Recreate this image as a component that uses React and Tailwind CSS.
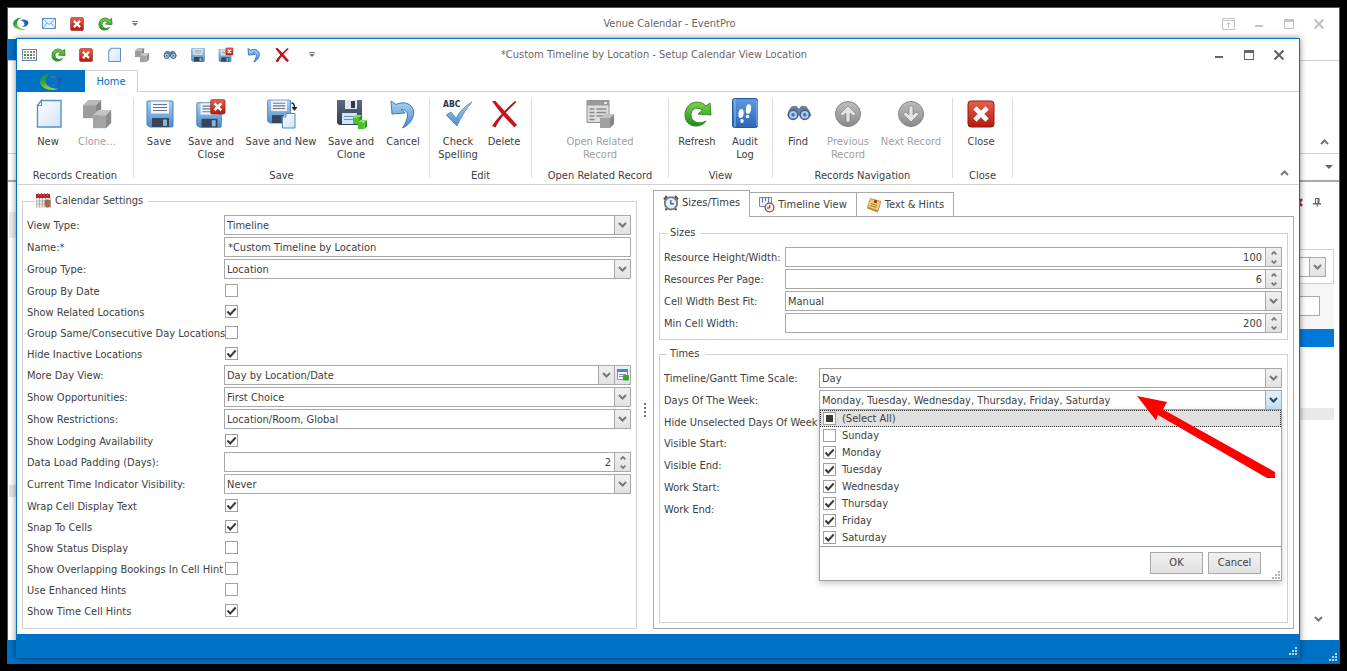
import React, { useEffect, useRef, useState } from "react";

/* ---------- icons ---------- */

function Svg({ small, children }) {
  return (
    <svg
      viewBox="0 0 32 32"
      aria-hidden="true"
      className={small ? "h-4 w-4 shrink-0" : "h-8 w-8 shrink-0"}
    >
      {children}
    </svg>
  );
}

function Gradients() {
  return (
    <svg className="absolute h-0 w-0" aria-hidden="true">
      <defs>
        <linearGradient id="gBlue" x1="0" y1="0" x2="0" y2="1">
          <stop offset="0" stopColor="#a9d2f3" />
          <stop offset="1" stopColor="#4d8bc8" />
        </linearGradient>
        <linearGradient id="gPage" x1="0" y1="0" x2="1" y2="1">
          <stop offset="0" stopColor="#ffffff" />
          <stop offset="1" stopColor="#cfe4f8" />
        </linearGradient>
        <linearGradient id="gRed" x1="0" y1="0" x2="0" y2="1">
          <stop offset="0" stopColor="#e8604c" />
          <stop offset="1" stopColor="#b31a0e" />
        </linearGradient>
        <linearGradient id="gGreen" x1="0" y1="0" x2="0" y2="1">
          <stop offset="0" stopColor="#7ed348" />
          <stop offset="1" stopColor="#1f8a1c" />
        </linearGradient>
        <linearGradient id="gGray" x1="0" y1="0" x2="0" y2="1">
          <stop offset="0" stopColor="#bdbdbd" />
          <stop offset="1" stopColor="#8a8a8a" />
        </linearGradient>
        <linearGradient id="gDark" x1="0" y1="0" x2="0" y2="1">
          <stop offset="0" stopColor="#5a6984" />
          <stop offset="1" stopColor="#313d55" />
        </linearGradient>
        <linearGradient id="gBook" x1="0" y1="0" x2="0" y2="1">
          <stop offset="0" stopColor="#5d9be2" />
          <stop offset="1" stopColor="#2c65b4" />
        </linearGradient>
        <linearGradient id="gLogo" x1="0" y1="0" x2="0" y2="1">
          <stop offset="0" stopColor="#1f8a4c" />
          <stop offset="0.5" stopColor="#2fa046" />
          <stop offset="1" stopColor="#a4d636" />
        </linearGradient>
        <linearGradient id="gLogoBlue" x1="0" y1="0" x2="1" y2="0">
          <stop offset="0" stopColor="#2f8fd0" />
          <stop offset="1" stopColor="#1c4f9f" />
        </linearGradient>
      </defs>
    </svg>
  );
}

const Logo = ({ large }) => (
  <svg viewBox="0 0 32 26" aria-hidden="true" className={large ? "h-[18px] w-[22px]" : "h-[13px] w-4"}>
    <path d="M18 1C8 1 0 7 0 14c0 7 9 12 19 12 3 0 6-1 8-2-9 1-19-4-19-11C8 7 12 3 18 1z" fill="url(#gLogo)" />
    <path d="M14 6c8-3 17 1 17 6-1 6-8 9-15 8 4-1 7-3 7-6s-4-6-9-8z" fill="url(#gLogoBlue)" />
  </svg>
);

const NewIcon = ({ small }) => (
  <Svg small={small}>
    <path d="M9.500 2.500H29v26.500H5.500V7.500z" fill="url(#gPage)" stroke="#5b8fc8" strokeWidth={small ? "2" : "1.400"} />
    <path d="M9.500 2.500v5h-4z" fill="#ffffff" stroke="#5b8fc8" strokeWidth="1.200" />
  </Svg>
);

function Cube({ x, y, s, top, front, side }) {
  return (
    <g transform={`translate(${x} ${y}) scale(${s})`}>
      <path d="M0 4l4-4h10l-4 4z" fill={top} />
      <path d="M10 4l4-4v10l-4 4z" fill={side} />
      <path d="M0 4h10v10H0z" fill={front} />
    </g>
  );
}

const CloneIcon = ({ small }) => (
  <Svg small={small}>
    <Cube x={2} y={2} s={1.3} top="#b9b9b9" front="#9c9c9c" side="#858585" />
    <Cube x={12} y={12} s={1.3} top="#c4c4c4" front="#a4a4a4" side="#8c8c8c" />
  </Svg>
);

function Disk() {
  return (
    <g>
      <path d="M4 3h24a1 1 0 0 1 1 1v24a1 1 0 0 1-1 1H6l-3-2V4a1 1 0 0 1 1-1z" fill="url(#gBlue)" stroke="#4a80b8" strokeWidth="1" />
      <path d="M7 3.500h18v12H7z" fill="#eef5fb" />
      <path d="M9 6.500h14M9 9.500h14M9 12.500h14" stroke="#6d7580" strokeWidth="1.200" />
      <path d="M8 20h17v9H8z" fill="#36455a" />
      <path d="M19 21.500h4v6.500h-4z" fill="#8ab4de" />
    </g>
  );
}

const RedX = () => (
  <g>
    <rect x="1" y="1" width="26" height="26" rx="3" fill="url(#gRed)" stroke="#97180e" strokeWidth="1" />
    <path d="M9.500 9.500l9 9M18.500 9.500l-9 9" stroke="#fff" strokeWidth="4.600" strokeLinecap="square" />
  </g>
);

const SaveIcon = ({ small }) => (
  <Svg small={small}>
    <g transform={small ? undefined : "translate(1 0)"}>
      <Disk />
    </g>
  </Svg>
);
const SaveCloseIcon = ({ small }) => (
  <Svg small={small}>
    <g transform="translate(-1 2) scale(.94)">
      <Disk />
    </g>
    <g transform="translate(15 1) scale(.56)">
      <RedX />
    </g>
  </Svg>
);
const SaveNewIcon = () => (
  <Svg>
    <g transform="translate(0 -.5) scale(.88)">
      <Disk />
    </g>
    <path d="M21 15.500h9v14.500H17.500V19z" fill="url(#gPage)" stroke="#4f8bc7" strokeWidth="1" />
    <path d="M21 15.500V19h-3.500" fill="none" stroke="#4f8bc7" strokeWidth="1" />
    <path d="M26.500 5c2.500 0 3 1.500 3 5" fill="none" stroke="#222" strokeWidth="1.400" />
    <path d="M26.500 9h6l-3 4z" fill="#222" />
  </Svg>
);
const SaveCloneIcon = () => (
  <Svg>
    <path d="M2 2h25v25H4l-2-2z" fill="url(#gDark)" />
    <path d="M10 2h12v9H10z" fill="#e4e8ee" />
    <path d="M16 3h4v7h-4z" fill="#2a3750" />
    <path d="M7 15h15v11H7z" fill="#cfe4f8" />
    <path d="M9 18.500h11M9 21.500h9" stroke="#6e90b4" strokeWidth="1.200" />
    <Cube x={18} y={17} s={0.65} top="#8be04c" front="#4cc02e" side="#2f9a1c" />
    <Cube x={23} y={22} s={0.65} top="#8be04c" front="#4cc02e" side="#2f9a1c" />
  </Svg>
);
const UndoIcon = ({ small }) => (
  <Svg small={small}>
    <path
      d="M4 3l1 13 13-1-4-3.500c6 0 8 5 5.500 10.500-1 3-2 5-4 8 8-3.500 12-11 11-17C25.500 6 17 2.500 9 6.500z"
      fill="url(#gBlue)"
      stroke="#3f78c4"
      strokeWidth={small ? "2" : "1"}
    />
  </Svg>
);
const DeleteIcon = ({ small }) => (
  <Svg small={small}>
    <path
      d="M4 3l3.500 0C13 9 22 19 29 27l-2.500 2.500C19 22 10 12 4 3z"
      fill="#c4161c"
      stroke="#c4161c"
      strokeWidth={small ? "2" : "0"}
    />
    <path
      d="M27 3l1.500 1C20 12 12 20 7.500 29.500L4 28C10 19 18 11 27 3z"
      fill="#b8141a"
      stroke="#b8141a"
      strokeWidth={small ? "2" : "0"}
    />
  </Svg>
);
const SpellIcon = () => (
  <Svg>
    <path d="M4 17l5-3 5 6C18 13 23 8 30 4 24 11 19 19 15 28z" fill="url(#gBlue)" stroke="#4c86c2" strokeWidth="0.800" />
    <text x="1" y="9" fontSize="8.500" fontWeight="700" fontFamily="DejaVu Sans Condensed, sans-serif" fill="#24344e">
      ABC
    </text>
  </Svg>
);
const RelatedIcon = () => (
  <Svg>
    <path d="M3 2.500h22v22H3z" fill="#dedede" stroke="#8f8f8f" />
    <path d="M3 2.500h22v5H3z" fill="#9a9a9a" />
    <path d="M20 4h3v2h-3z" fill="#e4e4e4" />
    <path d="M5.500 11h5M12.500 11h10M5.500 14.500h5M12.500 14.500h10M5.500 18h5M12.500 18h10M5.500 21.500h5" stroke="#8a8a8a" strokeWidth="1.300" />
    <Cube x={16} y={16} s={1} top="#c2c2c2" front="#a0a0a0" side="#868686" />
  </Svg>
);
const RefreshIcon = ({ small }) => (
  <Svg small={small}>
    <path
      d="M29 5l1 12-13-1 4.500-4C15 8 10 11 10 17c0 7 8 10 15 6C20 31 4 30 4 17 4 5 17 0 25 8z"
      fill="url(#gGreen)"
      stroke="#2f8f2a"
      strokeWidth={small ? "2" : "1"}
      strokeLinejoin="round"
    />
  </Svg>
);
const AuditIcon = () => (
  <Svg>
    <rect x="3.500" y="0.500" width="25" height="29" rx="2" fill="url(#gBook)" stroke="#24569c" />
    <path d="M6 1v28M28 3v25" stroke="#8fbcf0" strokeWidth="1" />
    <ellipse cx="19.500" cy="11" rx="2.600" ry="4.800" fill="#fff" transform="rotate(8 19.500 11)" />
    <ellipse cx="18.500" cy="18.500" rx="1.700" ry="1.700" fill="#fff" />
    <ellipse cx="12" cy="15.500" rx="2.600" ry="4.600" fill="#fff" transform="rotate(8 12 16)" />
    <ellipse cx="13" cy="23" rx="1.700" ry="2" fill="#fff" />
  </Svg>
);
const FindIcon = ({ small }) => (
  <Svg small={small}>
    <g transform={small ? undefined : "translate(2.500 1) scale(.9)"}>
      <path d="M5 12l3-4 5-.5 3 3 3-3 5 .5 3 4 3 6-6 5h-3l-5-5-5 5H9l-6-5z" fill="#6b7f9c" />
      <circle cx="9.500" cy="17.500" r="6" fill="#4b5f80" />
      <circle cx="22.500" cy="17.500" r="6" fill="#4b5f80" />
      <circle cx="9.500" cy="17.500" r="4.300" fill="#a4ccf5" />
      <circle cx="22.500" cy="17.500" r="4.300" fill="#a4ccf5" />
      <circle cx="9.500" cy="17.500" r="1.900" fill="#3b76c4" />
      <circle cx="22.500" cy="17.500" r="1.900" fill="#3b76c4" />
    </g>
  </Svg>
);
const PrevIcon = () => (
  <Svg>
    <circle cx="16" cy="16" r="12.500" fill="url(#gGray)" stroke="#858585" />
    <path d="M16 8l8 8-3 2-3-3v9h-4v-9l-3 3-3-2z" fill="#e4e4e4" stroke="#777" strokeWidth="0.600" />
  </Svg>
);
const NextIcon = () => (
  <Svg>
    <circle cx="16" cy="16" r="12.500" fill="url(#gGray)" stroke="#858585" />
    <path d="M16 24l8-8-3-2-3 3V8h-4v9l-3-3-3 2z" fill="#e4e4e4" stroke="#777" strokeWidth="0.600" />
  </Svg>
);
const CloseIcon = ({ small }) => (
  <Svg small={small}>
    <g transform="translate(2 2)">
      <RedX />
    </g>
  </Svg>
);
const CalendarGridIcon = () => (
  <svg viewBox="0 0 16 16" className="h-4 w-4" aria-hidden="true">
    <rect x="0.500" y="2.500" width="14" height="11" fill="#fff" stroke="#6f859c" />
    <path d="M2 4h2v2H2zM5 4h2v2H5z" fill="#8fa9c4" />
    <path d="M8 4h2v2H8zM11 4h2v2h-2z" fill="#e0602a" />
    <path d="M2 7h2v2H2zM5 7h2v2H5zM8 7h2v2H8z" fill="#3f8a2c" />
    <path d="M11 7h2v2h-2zM2 10h2v2H2z" fill="#8fa9c4" />
    <path d="M5 10h2v2H5zM8 10h2v2H8zM11 10h2v2h-2z" fill="#5b8fc8" />
  </svg>
);
const MailIcon = () => (
  <svg viewBox="0 0 16 16" className="h-4 w-4" aria-hidden="true">
    <rect x="1.500" y="2.500" width="13" height="10" fill="#e8f3fc" stroke="#5a8fc4" />
    <path d="M1.500 2.500L8 8.500l6.500-6M1.500 12.500L6 7M14.500 12.500L10 7" fill="none" stroke="#7fa9d4" />
  </svg>
);
const SettingsCalendarIcon = () => (
  <svg viewBox="0 0 16 16" className="h-4 w-4" aria-hidden="true">
    <path d="M0.500 4h14v10h-14z" fill="#f2f0ee" stroke="#a7a09b" strokeWidth="0.600" />
    <path d="M0 1h14v4H0z" fill="#c21d22" />
    <path d="M2.500 0v3M5.500 0v3M8.500 0v3M11.500 0v3" stroke="#777" strokeWidth="0.900" />
    <path d="M0.500 8h14M0.500 11h14M3.500 5v9M6.500 5v9M9.500 5v9" stroke="#9b9794" strokeWidth="0.700" />
    <path d="M8.500 7.500c2-1.500 5-1 6 0V14l-4 .5-2-2z" fill="#a8664e" />
  </svg>
);
const ClockIcon = () => (
  <svg viewBox="0 0 16 16" className="h-4 w-4" aria-hidden="true">
    <path d="M1 4.500l3-3.500M15 4.500l-3-3.500M2.500 15l2-2M13.500 15l-2-2" stroke="#555" strokeWidth="2.200" />
    <circle cx="8" cy="8.300" r="6.200" fill="#e3f0fb" stroke="#74787d" strokeWidth="1.800" />
    <path d="M7.800 5v3.800H11" fill="none" stroke="#28508a" strokeWidth="1.200" />
  </svg>
);
const TimelineIcon = () => (
  <svg viewBox="0 0 16 16" className="h-4 w-4" aria-hidden="true">
    <path d="M0.500 0.500h12v9h-12z" fill="#eaf2fb" stroke="#6b88b8" />
    <path d="M3.500 0.500v5M6.500 0.500v3.500M9.500 0.500v5" stroke="#5475b0" />
    <circle cx="10.500" cy="10.500" r="4.400" fill="#fbeeee" stroke="#b23a3a" strokeWidth="1.300" />
    <path d="M10.700 8v3H8" fill="none" stroke="#8c2020" />
  </svg>
);
const NoteIcon = () => (
  <svg viewBox="0 0 16 16" className="h-4 w-4" aria-hidden="true">
    <path d="M4.500 1.500l10.500 3-3.500 11-10.500-4z" fill="#c98d3c" />
    <path d="M4.500 1.500l10.500 3-3 9.500L1.500 10z" fill="#f0cd77" stroke="#a8742c" strokeWidth="0.600" />
    <path d="M5 6.500l6 2M4.300 8.500l6 2" stroke="#8a6428" strokeWidth="0.800" />
    <circle cx="9.500" cy="4.500" r="1.700" fill="#c22a1e" />
  </svg>
);
const EditListIcon = () => (
  <svg viewBox="0 0 14 14" className="h-3.5 w-3.5" aria-hidden="true">
    <path d="M1.500 1.500h10v10h-10z" fill="#f3f9ff" stroke="#6f9cc8" />
    <path d="M1 1h11v3H1z" fill="#3f8ad6" />
    <path d="M3 6.500h7M3 8.500h4" stroke="#7d93aa" />
    <rect x="7" y="7" width="6" height="5.500" rx="1" fill="#3fa32a" />
  </svg>
);

function Chevron({ up, tiny, dark }) {
  return (
    <svg viewBox="0 0 9 6" aria-hidden="true" className={tiny ? "h-1 w-1.5" : "h-1.5 w-[9px]"}>
      <path
        d={up ? "M1 5l3.500-3.500L8 5" : "M1 1l3.500 3.500L8 1"}
        fill="none"
        stroke={dark ? "#34404c" : "#777777"}
        strokeWidth={tiny ? "2.600" : "2"}
      />
    </svg>
  );
}

const Caret = () => (
  <svg viewBox="0 0 6 6" aria-hidden="true" className="h-1.5 w-1.5">
    <path d="M0 0.500h6" stroke="#777" strokeWidth="1" />
    <path d="M0 2h6L3 5z" fill="#777" />
  </svg>
);

function Grip({ className }) {
  return (
    <svg viewBox="0 0 8 8" aria-hidden="true" className={"h-2 w-2 " + className}>
      <path d="M6 0h2v2H6zM3 3h2v2H3zM6 3h2v2H6zM0 6h2v2H0zM3 6h2v2H3zM6 6h2v2H6z" fill="currentColor" />
    </svg>
  );
}

/* ---------- window chrome ---------- */

const MIN = "M1 6h8v2H1z";

function WindowButtons({ pinned, className }) {
  return (
    <div className={"flex items-center justify-end gap-4 " + className}>
      {pinned && (
        <button aria-label="Ribbon display options" className="flex h-3.5 w-3.5 items-center justify-center">
          <svg viewBox="0 0 14 12" className="h-3 w-3.5" fill="none" stroke="currentColor">
            <path d="M0.500 0.500h12v11h-12zM1 2.500h12" />
            <path d="M6.500 10V5M4.500 6.500l2-2 2 2" />
          </svg>
        </button>
      )}
      <button aria-label="Minimize" className="flex h-3.5 w-3.5 items-center justify-center">
        <svg viewBox="0 0 10 10" className="h-2.5 w-2.5" fill="currentColor">
          <path d={MIN} />
        </svg>
      </button>
      <button aria-label="Maximize" className="flex h-3.5 w-3.5 items-center justify-center">
        <svg viewBox="0 0 10 10" className="h-2.5 w-2.5" fill="currentColor">
          <path d="M0 0h10v10H0zM1 3v6h8V3z" fillRule="evenodd" />
        </svg>
      </button>
      <button aria-label="Close window" className="flex h-3.5 w-3.5 items-center justify-center">
        <svg viewBox="0 0 10 10" className="h-2.5 w-2.5" fill="none" stroke="currentColor" strokeWidth="2.200">
          <path d="M0.500 0.500l9 9M9.500 0.500l-9 9" />
        </svg>
      </button>
    </div>
  );
}

function TitleBar({ title, tools, pinned, buttonTone, className }) {
  return (
    <header className={"grid shrink-0 grid-cols-[1fr_auto_1fr] items-center text-[#686868] " + className}>
      <div className="flex items-center gap-3">
        {tools.map(([label, icon]) => (
          <button key={label} aria-label={label} className="flex h-4 w-4 items-center justify-center">
            {icon}
          </button>
        ))}
        <button aria-label="Customize toolbar" className="ml-0.5 flex h-4 w-4 items-center justify-center">
          <Caret />
        </button>
      </div>
      <h1>{title}</h1>
      <WindowButtons pinned={pinned} className={buttonTone} />
    </header>
  );
}

/* ---------- ribbon ---------- */

function RibbonButton({ icon, label, width, disabled }) {
  return (
    <button
      disabled={disabled}
      className={"flex flex-col items-center leading-[13px] " + width + (disabled ? " text-[#a0a0a0]" : "")}
    >
      {icon}
      <span className="mt-[5px]">{label}</span>
    </button>
  );
}

function RibbonGroup({ caption, width, align, children }) {
  return (
    <section className={"flex " + width}>
      <div className="flex flex-1 flex-col">
        <div className={"flex flex-1 items-start gap-px " + (align || "pl-px")}>{children}</div>
        <div className="h-4 text-center leading-4">{caption}</div>
      </div>
      <div className="h-20 w-px bg-[#dcdcdc]" />
    </section>
  );
}

function Ribbon() {
  return (
    <div className="flex h-[93px] shrink-0 justify-between border-b border-[#d0d0d0] pt-1.5">
      <div className="flex">
        <RibbonGroup caption="Records Creation" width="w-[117px]" align="pl-[7px]">
          <RibbonButton icon={<NewIcon />} label="New" width="w-12" />
          <RibbonButton icon={<CloneIcon />} label="Clone…" width="w-12" disabled />
        </RibbonGroup>
        <RibbonGroup caption="Save" width="w-[296px]">
          <RibbonButton icon={<SaveIcon />} label="Save" width="w-12" />
          <RibbonButton icon={<SaveCloseIcon />} label={<>Save and<br />Close</>} width="w-[54px]" />
          <RibbonButton icon={<SaveNewIcon />} label="Save and New" width="w-[84px]" />
          <RibbonButton icon={<SaveCloneIcon />} label={<>Save and<br />Clone</>} width="w-[54px]" />
          <RibbonButton icon={<UndoIcon />} label="Cancel" width="w-12" />
        </RibbonGroup>
        <RibbonGroup caption="Edit" width="w-[102px]">
          <RibbonButton icon={<SpellIcon />} label={<>Check<br />Spelling</>} width="w-[54px]" />
          <RibbonButton icon={<DeleteIcon />} label="Delete" width="w-9" />
        </RibbonGroup>
        <RibbonGroup caption="Open Related Record" width="w-[137px]" align="justify-center">
          <RibbonButton icon={<RelatedIcon />} label={<>Open Related<br />Record</>} width="w-20" disabled />
        </RibbonGroup>
        <RibbonGroup caption="View" width="w-[104px]">
          <RibbonButton icon={<RefreshIcon />} label="Refresh" width="w-[54px]" />
          <RibbonButton icon={<AuditIcon />} label={<>Audit<br />Log</>} width="w-10" />
        </RibbonGroup>
        <RibbonGroup caption="Records Navigation" width="w-[180px]">
          <RibbonButton icon={<FindIcon />} label="Find" width="w-12" />
          <RibbonButton icon={<PrevIcon />} label={<>Previous<br />Record</>} width="w-[50px]" disabled />
          <RibbonButton icon={<NextIcon />} label="Next Record" width="w-[74px]" disabled />
        </RibbonGroup>
        <RibbonGroup caption="Close" width="w-[60px]" align="pl-1">
          <RibbonButton icon={<CloseIcon />} label="Close" width="w-12" />
        </RibbonGroup>
      </div>
      <button aria-label="Collapse ribbon" className="mr-2.5 flex items-end pb-2">
        <Chevron up />
      </button>
    </div>
  );
}

/* ---------- form controls ---------- */

const FIELD = "flex h-5 min-w-0 flex-1 border border-[#a8a8a8] bg-white";
const CELL = "w-4 shrink-0 items-center justify-center border-l border-[#a8a8a8] bg-linear-to-b from-[#f0f0f0] to-[#e2e2e2]";

function CheckBox({ id, defaultChecked, mixed }) {
  const ref = useRef(null);
  useEffect(() => {
    if (mixed) ref.current.indeterminate = true;
  }, [mixed]);
  return (
    <span className="relative h-[13px] w-[13px] shrink-0">
      <input
        ref={ref}
        id={id}
        type="checkbox"
        defaultChecked={defaultChecked}
        className="peer block h-[13px] w-[13px] appearance-none border border-[#a0a0a0] bg-white"
      />
      <svg viewBox="0 0 13 13" aria-hidden="true" className="pointer-events-none absolute inset-0 hidden peer-checked:block">
        <path d="M2.500 6.500l2.700 3L10.700 3.500" fill="none" stroke="#3b3b3b" strokeWidth="2" />
      </svg>
      {mixed && (
        <svg viewBox="0 0 13 13" aria-hidden="true" className="pointer-events-none absolute inset-0">
          <path d="M3 3h7v7H3z" fill="#3b3b3b" />
        </svg>
      )}
    </span>
  );
}

function SelectBox({ id, value, active, extra, children }) {
  return (
    <div className={FIELD + " relative"}>
      <div className="relative min-w-0 flex-1">
        <select id={id} className="h-full w-full appearance-none truncate bg-transparent pt-0.5 pr-4 pl-0.5 outline-none">
          <option>{value}</option>
        </select>
        <span
          className={
            "pointer-events-none absolute inset-y-0 right-0 flex w-4 items-center justify-center border-l border-[#a8a8a8] bg-linear-to-b " +
            (active ? "from-[#e3f1fd] to-[#bfdef8]" : "from-[#f0f0f0] to-[#e2e2e2]")
          }
        >
          <Chevron dark={active} />
        </span>
      </div>
      {extra}
      {children}
    </div>
  );
}

function TextBox({ id, value }) {
  return (
    <div className={FIELD}>
      <input id={id} type="text" defaultValue={value} className="w-full pt-0.5 pl-[3px] outline-none" />
    </div>
  );
}

function SpinBox({ id, value }) {
  return (
    <div className={FIELD}>
      <input id={id} type="text" inputMode="numeric" defaultValue={value} className="min-w-0 flex-1 pt-0.5 pr-[3px] text-right outline-none" />
      <div className={"flex flex-col " + CELL}>
        <button aria-label="Increase" tabIndex={-1} className="flex flex-1 items-center justify-center">
          <Chevron up tiny />
        </button>
        <button aria-label="Decrease" tabIndex={-1} className="flex flex-1 items-center justify-center">
          <Chevron tiny />
        </button>
      </div>
    </div>
  );
}

function FieldRow({ id, label, type, value, labelWidth }) {
  if (type === "check") {
    return (
      <div className="flex h-[19px] items-center">
        <label htmlFor={id} className={"shrink-0 pt-0.5 whitespace-nowrap " + labelWidth}>
          {label}
        </label>
        <div className="flex pl-px">
          <CheckBox id={id} defaultChecked={value} />
        </div>
      </div>
    );
  }
  return (
    <div className="flex h-5 items-center">
      <label htmlFor={id} className={"shrink-0 pt-0.5 whitespace-nowrap " + labelWidth}>
        {label}
      </label>
      {type === "select" && <SelectBox id={id} value={value} />}
      {type === "lookup" && (
        <SelectBox
          id={id}
          value={value}
          extra={
            <button aria-label="Edit day view" className={"flex " + CELL}>
              <EditListIcon />
            </button>
          }
        />
      )}
      {type === "text" && <TextBox id={id} value={value} />}
      {type === "spin" && <SpinBox id={id} value={value} />}
      {type === "days" && (
        <SelectBox id={id} value={value} active>
          <DaysPopup />
          <PointerArrow />
        </SelectBox>
      )}
    </div>
  );
}

const DAYS = ["Sunday", "Monday", "Tuesday", "Wednesday", "Thursday", "Friday", "Saturday"];

function DaysPopup() {
  return (
    <div className="absolute top-full -right-px -left-px z-20 border border-[#a0a0a0] bg-white shadow-[0_3px_6px_rgba(0,0,0,0.2)]">
      <ul>
        <li className="flex h-[17px] items-center gap-1.5 border border-dotted border-[#303030] bg-[#e0e0e0] pl-0.5">
          <CheckBox id="day-all" mixed />
          <label htmlFor="day-all" className="pt-px">(Select All)</label>
        </li>
        {DAYS.map((day, i) => (
          <li key={day} className="flex h-[17px] items-center gap-1.5 pl-[3px]">
            <CheckBox id={"day-" + day} defaultChecked={i > 0} />
            <label htmlFor={"day-" + day} className="pt-px">{day}</label>
          </li>
        ))}
      </ul>
      <div className="flex h-[34px] justify-end gap-[5px] border-t border-[#a0a0a0] pt-[5px] pr-px">
        <button className="h-[22px] w-[53px] border border-[#a8a8a8] bg-linear-to-b from-[#f0f0f0] to-[#e2e2e2]">OK</button>
        <button className="h-[22px] w-[53px] border border-[#a8a8a8] bg-linear-to-b from-[#f0f0f0] to-[#e2e2e2]">Cancel</button>
        <Grip className="mb-px ml-1.5 self-end text-[#b4b4b4]" />
      </div>
    </div>
  );
}

function PointerArrow() {
  return (
    <svg viewBox="0 0 138 82" aria-hidden="true" className="pointer-events-none absolute top-[5px] right-1.5 z-30 h-[82px] w-[138px]">
      <path d="M0 0l30 6-4 7.500L138 76v6h-8L21 19l-2 5.500z" fill="#fe0000" />
    </svg>
  );
}

const CALENDAR_FIELDS = [
  ["View Type:", "select", "Timeline"],
  ["Name:", "text", "*Custom Timeline by Location"],
  ["Group Type:", "select", "Location"],
  ["Group By Date", "check", false],
  ["Show Related Locations", "check", true],
  ["Group Same/Consecutive Day Locations", "check", false],
  ["Hide Inactive Locations", "check", true],
  ["More Day View:", "lookup", "Day by Location/Date"],
  ["Show Opportunities:", "select", "First Choice"],
  ["Show Restrictions:", "select", "Location/Room, Global"],
  ["Show Lodging Availability", "check", true],
  ["Data Load Padding (Days):", "spin", "2"],
  ["Current Time Indicator Visibility:", "select", "Never"],
  ["Wrap Cell Display Text", "check", true],
  ["Snap To Cells", "check", true],
  ["Show Status Display", "check", false],
  ["Show Overlapping Bookings In Cell Hint", "check", false],
  ["Use Enhanced Hints", "check", false],
  ["Show Time Cell Hints", "check", true],
];

const SIZE_FIELDS = [
  ["Resource Height/Width:", "spin", "100"],
  ["Resources Per Page:", "spin", "6"],
  ["Cell Width Best Fit:", "select", "Manual"],
  ["Min Cell Width:", "spin", "200"],
];

const TIME_FIELDS = [
  ["Timeline/Gantt Time Scale:", "select", "Day"],
  ["Days Of The Week:", "days", "Monday, Tuesday, Wednesday, Thursday, Friday, Saturday"],
  ["Hide Unselected Days Of Week", "check", false],
  ["Visible Start:", "text", ""],
  ["Visible End:", "text", ""],
  ["Work Start:", "text", ""],
  ["Work End:", "text", ""],
];

function FieldList({ fields, prefix, labelWidth }) {
  return (
    <div className="flex flex-col gap-0.5">
      {fields.map(([label, type, value], i) => (
        <FieldRow
          key={label}
          id={prefix + i}
          type={type}
          value={value}
          labelWidth={labelWidth}
          label={label === "Name:" ? <>Name:<span className="text-[#1e4f8c]">*</span></> : label}
        />
      ))}
    </div>
  );
}

function CalendarSettings() {
  return (
    <fieldset className="min-w-0 flex-1 border border-[#d0d0d0] pr-[5px] pb-1.5 pl-1">
      <legend className="ml-2 flex h-4 items-center gap-[3px] pr-[5px] pl-px">
        <SettingsCalendarIcon />
        Calendar Settings
      </legend>
      <div className="pt-1.5">
        <FieldList fields={CALENDAR_FIELDS} prefix="cal-" labelWidth="w-[197px]" />
      </div>
    </fieldset>
  );
}

function SettingsTabs() {
  const [active, setActive] = useState(0);
  const tabs = [
    ["Sizes/Times", <ClockIcon />],
    ["Timeline View", <TimelineIcon />],
    ["Text & Hints", <NoteIcon />],
  ];
  return (
    <div className="flex min-w-0 flex-[641] flex-col">
      <div role="tablist" className="flex h-[27px] items-end">
        {tabs.map(([label, icon], i) => (
          <button
            key={label}
            role="tab"
            aria-selected={active === i}
            onClick={() => setActive(i)}
            className={
              "flex items-center gap-[3px] border-[#a8a8a8] px-[9px] " +
              (active === i ? "h-[27px] border-x border-t pb-0.5" : "h-[25px] border-y border-r")
            }
          >
            {icon}
            {label}
          </button>
        ))}
        <div className="flex-1 self-stretch border-b border-[#a8a8a8]" />
      </div>
      <div className="flex flex-1 flex-col gap-1.5 border-x border-b border-[#a8a8a8] px-[5px] pt-2 pb-[5px]">
        <fieldset className="min-w-0 border border-[#d0d0d0] pr-[5px] pb-1.5 pl-1">
          <legend className="ml-[3px] h-4 pr-1.5 pl-[3px] leading-4">Sizes</legend>
          <div className="pt-1.5">
            <FieldList fields={SIZE_FIELDS} prefix="size-" labelWidth="w-[121px]" />
          </div>
        </fieldset>
        <fieldset className="min-w-0 flex-1 border border-[#d0d0d0] pr-[5px] pl-1">
          <legend className="ml-[3px] h-4 pr-1.5 pl-[3px] leading-4">Times</legend>
          <div className="pt-1.5">
            <FieldList fields={TIME_FIELDS} prefix="time-" labelWidth="w-[155px]" />
          </div>
        </fieldset>
      </div>
    </div>
  );
}

/* ---------- windows ---------- */

const MAIN_TOOLS = [
  ["EventPro", <Logo />],
  ["Mail", <MailIcon />],
  ["Close", <CloseIcon small />],
  ["Refresh", <RefreshIcon small />],
];

const DIALOG_TOOLS = [
  ["Calendar view", <CalendarGridIcon />],
  ["Refresh", <RefreshIcon small />],
  ["Close", <CloseIcon small />],
  ["New", <NewIcon small />],
  ["Clone", <CloneIcon small />],
  ["Find", <FindIcon small />],
  ["Save", <SaveIcon small />],
  ["Save and close", <SaveCloseIcon small />],
  ["Undo", <UndoIcon small />],
  ["Delete", <DeleteIcon small />],
];

function SetupDialog() {
  return (
    <div
      role="dialog"
      aria-label="Setup Calendar View Location"
      className="absolute top-[30px] right-[39px] bottom-[5px] left-2 flex flex-col border border-[#0072c6] bg-white shadow-[0_0_6px_rgba(0,0,0,0.5)]"
    >
      <TitleBar
        title="*Custom Timeline by Location - Setup Calendar View Location"
        tools={DIALOG_TOOLS}
        buttonTone="text-[#666666]"
        className="h-[31px] pr-[13px] pl-[5px]"
      />
      <nav className="flex h-[22px] shrink-0">
        <button aria-label="Application menu" className="flex w-[68px] items-center justify-center bg-[#0072c6]">
          <Logo large />
        </button>
        <button className="w-[53px] border-t border-r border-[#d0d0d0] text-[#0072c6]">Home</button>
        <div className="flex-1 border-b border-[#d0d0d0]" />
      </nav>
      <Ribbon />
      <main className="flex flex-1 px-[5px] pt-[5px] pb-[5px]">
        <div className="flex min-w-0 flex-[615] pt-[3px]">
          <CalendarSettings />
        </div>
        <div className="flex w-4 items-center justify-center">
          <svg viewBox="0 0 2 14" aria-hidden="true" className="h-3.5 w-0.5">
            <path d="M0 0h2v2H0zM0 4h2v2H0zM0 8h2v2H0zM0 12h2v2H0z" fill="#777" />
          </svg>
        </div>
        <SettingsTabs />
      </main>
      <footer className="flex h-[23px] shrink-0 items-end justify-end bg-[#0072c6] pr-0.5 pb-0.5">
        <Grip className="text-[#b9d3ea]" />
      </footer>
    </div>
  );
}

function MainWindow() {
  return (
    <div className="relative flex flex-1 flex-col border border-[#555555] bg-white">
      <TitleBar
        title="Venue Calendar - EventPro"
        tools={MAIN_TOOLS}
        pinned
        buttonTone="text-[#c4c4c4]"
        className="h-[31px] pr-[13px] pl-[5px]"
      />
      <div className="flex h-[22px] shrink-0 border-b border-[#d0d0d0]">
        <div className="w-[68px] bg-[#0072c6]" />
      </div>
      <div className="flex h-[93px] shrink-0 items-end justify-end border-b border-[#d0d0d0] pr-2.5 pb-2">
        <Chevron up />
      </div>
      <div className="flex h-7 shrink-0 items-center justify-end border-b-2 border-[#a8a8a8] pr-1.5">
        <svg viewBox="0 0 8 4" className="h-1 w-2" aria-hidden="true">
          <path d="M0 0h8L4 4z" fill="#666" />
        </svg>
      </div>
      <div className="flex flex-1 justify-between">
        <div className="flex w-8 flex-col pl-px">
          <div className="mt-[30px] h-[26px] bg-[#ececec]" />
          <div className="mt-[247px] h-3 bg-[#e4e4e4]" />
        </div>
        <div className="flex w-20 flex-col">
          <div className="flex h-[67px] items-start justify-end gap-2.5 pt-4 pr-[18px]">
            <svg viewBox="0 0 8 9" className="h-[9px] w-2" aria-hidden="true">
              <path d="M1 1l6 7M7 1L1 8" stroke="#b22a2e" strokeWidth="2.500" />
            </svg>
            <svg viewBox="0 0 8 9" className="h-[9px] w-2" aria-hidden="true">
              <path d="M2 0h4.500v5H8v1.500H4.700V9H3.700V6.500H0V5h2z" fill="#666" />
              <path d="M3 1h1.500v4H3z" fill="#fff" />
            </svg>
          </div>
          <div className="mr-[5px] flex h-[35px] items-center border border-l-0 border-[#d0d0d0] pr-[7px]">
            <div className="flex h-5 flex-1 justify-end border border-[#a8a8a8]">
              <div className={"flex " + CELL}>
                <Chevron />
              </div>
            </div>
          </div>
          <div className="mr-[5px] h-[45px] bg-[#f5f5f5] pt-3 pr-3.5">
            <div className="h-5 border border-[#a8a8a8] bg-white" />
          </div>
          <div className="mr-[5px] h-[18px] bg-[#0078d7]" />
          <div className="mt-[61px] mr-[5px] h-3 bg-[#e9e9e9]" />
          <div className="flex flex-1 items-end justify-end pr-4 pb-[18px]">
            <Chevron />
          </div>
        </div>
      </div>
      <footer className="flex h-[23px] shrink-0 items-end justify-end bg-[#0072c6] pr-0.5 pb-0.5">
        <Grip className="text-[#b9d3ea]" />
      </footer>
      <SetupDialog />
    </div>
  );
}

export default function App() {
  return (
    <div className="flex min-h-screen flex-col bg-black px-[7px] pt-[7px] pb-[7px] font-['DejaVu_Sans_Condensed','Noto_Sans',sans-serif] text-[11px] leading-[14px] text-[#404040]">
      <Gradients />
      <MainWindow />
    </div>
  );
}
